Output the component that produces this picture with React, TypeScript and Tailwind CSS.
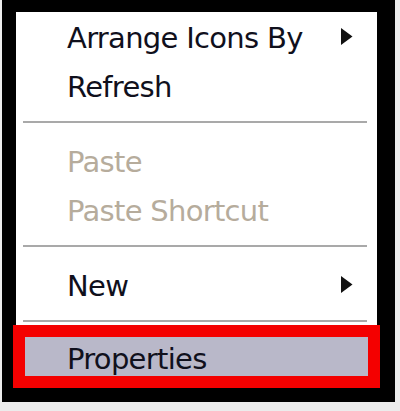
import type { ReactNode } from "react";

type Item =
  | { kind: "item"; label: string; disabled?: boolean; submenu?: boolean }
  | { kind: "sep" };

const TOP_ITEMS: Item[] = [
  { kind: "item", label: "Arrange Icons By", submenu: true },
  { kind: "item", label: "Refresh" },
  { kind: "sep" },
  { kind: "item", label: "Paste", disabled: true },
  { kind: "item", label: "Paste Shortcut", disabled: true },
  { kind: "sep" },
  { kind: "item", label: "New", submenu: true },
];

function SubmenuArrow() {
  return (
    <svg width="13" height="17" viewBox="0 0 13 17" className="mb-[4px] shrink-0">
      <path d="M1 0 L12.5 8.5 L1 17 Z" fill="#111" />
    </svg>
  );
}

function MenuRow({
  label,
  disabled,
  submenu,
  className = "",
}: {
  label: ReactNode;
  disabled?: boolean;
  submenu?: boolean;
  className?: string;
}) {
  return (
    <div
      className={`flex h-[49px] items-center justify-between pr-[24px] pl-[51px] text-[29px] leading-[49px] tracking-[-0.7px] ${
        disabled ? "text-[#b6ac9c]" : "text-[#10101c]"
      } ${className}`}
    >
      <span>{label}</span>
      {submenu && <SubmenuArrow />}
    </div>
  );
}

function Separator({ bottom = 15 }: { bottom?: number }) {
  return (
    <div className={`pt-[9px] pr-[10px] pl-[7px] ${bottom === 15 ? "pb-[15px]" : "pb-[13px]"}`}>
      <div className="h-[2px] bg-[#a9a9a9]" />
    </div>
  );
}

export default function App() {
  return (
    <div
      className="h-[411px] w-[400px] overflow-hidden bg-[#ececec] pl-[2px]"
      style={{ fontFamily: '"DejaVu Sans", Verdana, sans-serif' }}
    >
      <div className="h-[402px] w-[393px] bg-black pt-[12px] pl-[14px]">
        {/* menu body */}
        <div className="relative w-[361px] bg-white pt-[2px] pb-[4px]">
          {TOP_ITEMS.map((item, i) =>
            item.kind === "sep" ? (
              <Separator key={i} />
            ) : (
              <MenuRow key={i} label={item.label} disabled={item.disabled} submenu={item.submenu} />
            )
          )}
          <Separator bottom={13} />
          <MenuRow label="Properties" className="bg-[#b9b8c9]" />

          {/* red annotation box over the selected item */}
          <div className="pointer-events-none absolute top-[313px] left-[-3px] h-[63px] w-[367px] border-[12px] border-[#f40000]" />
        </div>
      </div>
    </div>
  );
}
